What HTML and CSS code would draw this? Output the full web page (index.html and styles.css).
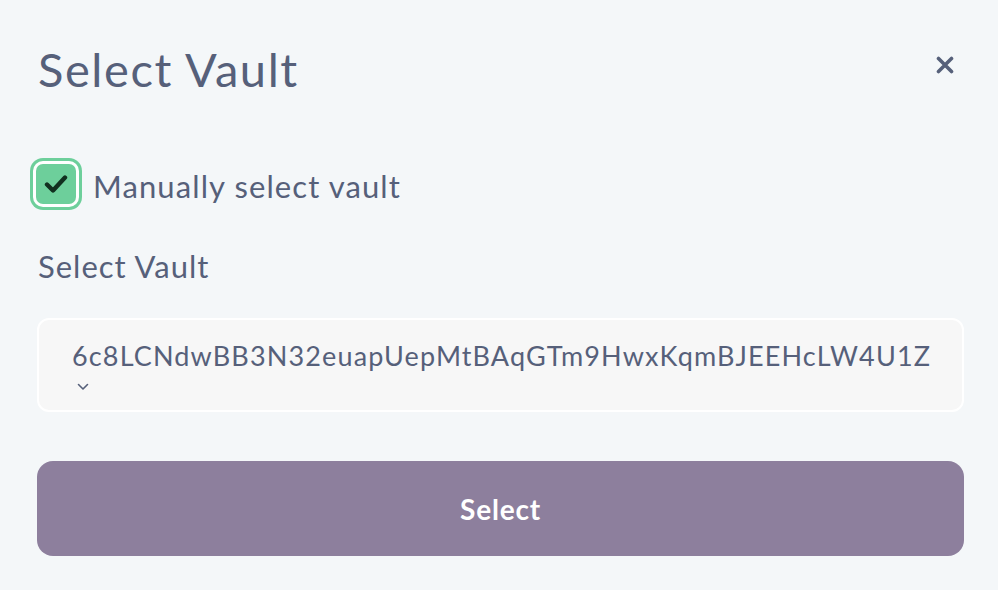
FILE: index.html
```html
<!DOCTYPE html>
<html>
<head>
<meta charset="utf-8">
<link rel="stylesheet" href="styles.css">
</head>
<body>
<div class="modal">
  <div class="header">
    <h1 class="title">Select Vault</h1>
    <button class="close" aria-label="Close">
      <svg width="18" height="18" viewBox="0 0 18 18"><path d="M2.5 2.5 L15.5 15.5 M15.5 2.5 L2.5 15.5" stroke="#56607a" stroke-width="3.6" stroke-linecap="round"/></svg>
    </button>
  </div>
  <label class="check-row">
    <span class="checkbox">
      <svg width="24" height="20" viewBox="0 0 24 20"><path d="M3 10.5 L9 16.5 L21 3.5" fill="none" stroke="#11301f" stroke-width="4.4" stroke-linecap="round" stroke-linejoin="round"/></svg>
    </span>
    <span class="check-label">Manually select vault</span>
  </label>
  <div class="field-label">Select Vault</div>
  <div class="select">
    <div class="select-value">6c8LCNdwBB3N32euapUepMtBAqGTm9HwxKqmBJEEHcLW4U1Z</div>
    <svg class="chevron" width="12" height="8" viewBox="0 0 12 8"><path d="M1.5 1.5 L6 6 L10.5 1.5" fill="none" stroke="#56607a" stroke-width="1.6" stroke-linecap="round" stroke-linejoin="round"/></svg>
  </div>
  <button class="primary">Select</button>
</div>
</body>
</html>
```

FILE: styles.css
```css
html, body {
  margin: 0;
  padding: 0;
  background: #f4f7f9;
}
body {
  font-family: Lato, "Noto Sans", sans-serif;
  color: #56607a;
}
.modal {
  padding: 38px 34px 0 37px;
  box-sizing: border-box;
  width: 998px;
}
.header {
  display: flex;
  justify-content: space-between;
  align-items: flex-start;
}
.title {
  margin: 0;
  font-weight: 400;
  font-size: 47px;
  line-height: 62px;
  letter-spacing: 1.6px;
  padding-left: 1px;
  color: #56607a;
}
.close {
  border: none;
  background: none;
  padding: 0;
  margin: 18px 10px 0 0;
  width: 18px;
  height: 18px;
  display: flex;
}
.check-row {
  display: flex;
  align-items: center;
  margin-top: 57px;
  margin-left: -8px;
}
.checkbox {
  width: 40px;
  height: 40px;
  border-radius: 7px;
  background: #6dcf9b;
  box-shadow: 0 0 0 3px #ffffff, 0 0 0 6px #6dcf9b;
  margin: 7px;
  display: flex;
  align-items: center;
  justify-content: center;
}
.check-label {
  margin-left: 10px;
  font-size: 31px;
  line-height: 40px;
  letter-spacing: 1.1px;
  position: relative;
  top: 2px;
}
.field-label {
  margin-top: 36px;
  font-size: 31px;
  line-height: 38px;
  letter-spacing: 1px;
  padding-left: 1px;
}
.select {
  margin-top: 33px;
  height: 94px;
  box-sizing: border-box;
  background: #f7f7f7;
  border: 2px solid #ffffff;
  border-radius: 12px;
  padding: 18px 0 0 33px;
}
.select-value {
  font-size: 27px;
  line-height: 36px;
  letter-spacing: 1.15px;
}
.chevron {
  display: block;
  margin: 9px 0 0 5px;
}
.primary {
  margin-top: 49px;
  width: 100%;
  height: 95px;
  border: none;
  border-radius: 16px;
  background: #8d7f9d;
  color: #ffffff;
  font-family: Lato, "Noto Sans", sans-serif;
  font-weight: 700;
  font-size: 28px;
  letter-spacing: 0.8px;
}
```
